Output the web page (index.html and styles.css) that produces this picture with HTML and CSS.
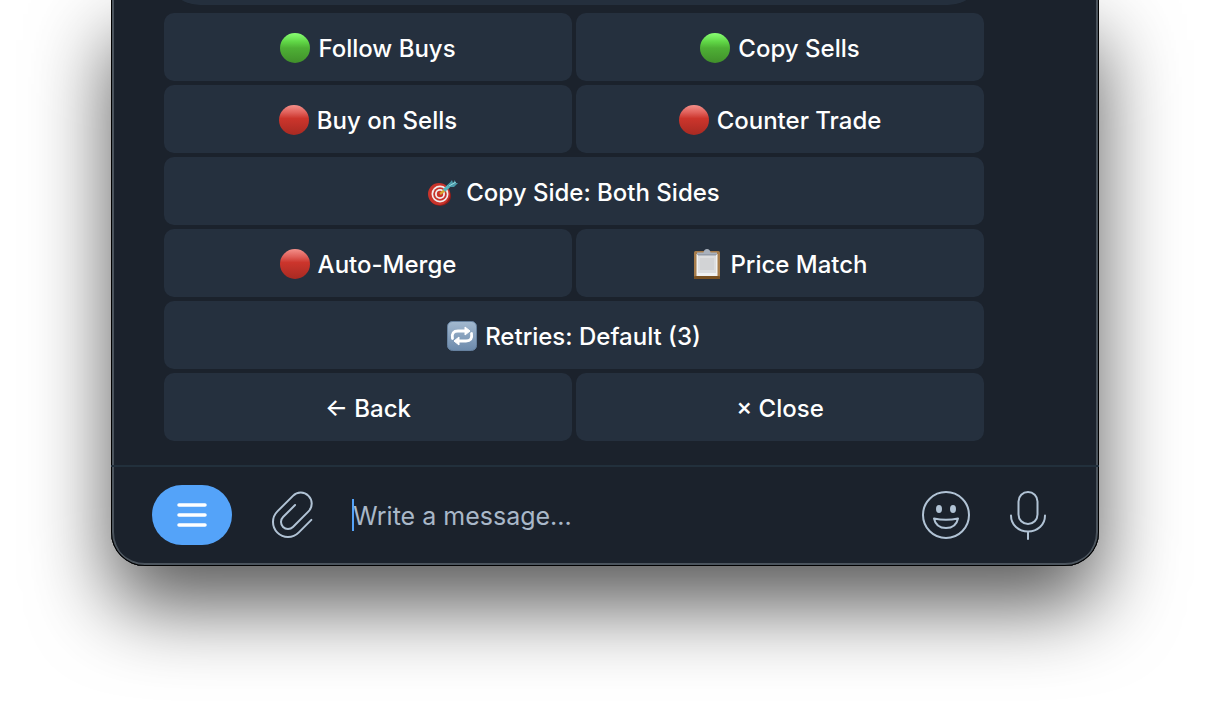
FILE: index.html
```html
<!DOCTYPE html>
<html lang="en">
<head>
    <meta charset="UTF-8">
    <meta name="viewport" content="width=device-width, initial-scale=1.0">
    <title>Copy Trade Settings</title>
    <link rel="stylesheet" href="styles.css">
</head>
<body>
    <main class="window">
        <section class="chat">
            <div class="bubble"></div>
            <div class="keyboard">
                <button type="button" class="key"><span class="dot green"></span>Follow Buys</button>
                <button type="button" class="key"><span class="dot green"></span>Copy Sells</button>
                <button type="button" class="key"><span class="dot red"></span>Buy on Sells</button>
                <button type="button" class="key"><span class="dot red"></span>Counter Trade</button>
                <button type="button" class="key wide">
                    <svg class="emoji" viewBox="0 0 30 30" aria-hidden="true">
                        <ellipse cx="12" cy="19" rx="11" ry="10" fill="#8f1d1a"/>
                        <ellipse cx="11" cy="17" rx="11" ry="11" fill="#c8342c"/>
                        <ellipse cx="12" cy="17" rx="8.500" ry="8.500" fill="#f1eeee"/>
                        <ellipse cx="12" cy="17" rx="6.800" ry="6.800" fill="#c8342c"/>
                        <ellipse cx="12" cy="17" rx="5" ry="5" fill="#f1eeee"/>
                        <ellipse cx="12" cy="17" rx="3.200" ry="3.200" fill="#c8342c"/>
                        <path d="M12 17 L17 13" stroke="#d9a62e" stroke-width="2.4"/>
                        <path d="M16 13.500 L23 7" stroke="#58b4bd" stroke-width="3.6"/>
                        <path d="M20 8 L24 3 L25 6 L27 3 L27 6 L30 6 L26 10 L21 10 Z" fill="#4a9aa8"/>
                        <path d="M21 9 L28 5" stroke="#9be0e4" stroke-width="1"/>
                    </svg>Copy Side: Both Sides
                </button>
                <button type="button" class="key"><span class="dot red"></span>Auto-Merge</button>
                <button type="button" class="key">
                    <svg class="emoji" viewBox="0 0 30 30" aria-hidden="true">
                        <rect x="2" y="2" width="26" height="28" rx="1.5" fill="#a67c4b"/>
                        <rect x="2" y="27" width="26" height="3" rx="1" fill="#7a5122"/>
                        <rect x="4.500" y="5" width="21" height="22" fill="#f0f1f2"/>
                        <rect x="6" y="7" width="18" height="17" fill="#dcdddf"/>
                        <rect x="8" y="9" width="14" height="12" fill="#d2d3d5"/>
                        <path d="M5 6 V3.500 H11.500 Q12 0 15 0 Q18 0 18.500 3.500 H25 V6 Z" fill="#a9b1bd"/>
                        <path d="M6 6 H24" stroke="#7f8794" stroke-width="1"/>
                    </svg>Price Match
                </button>
                <button type="button" class="key wide">
                    <svg class="emoji" viewBox="0 0 30 30" aria-hidden="true">
                        <defs>
                            <linearGradient id="tile" x1="0" y1="0" x2="0" y2="1">
                                <stop offset="0" stop-color="#a3b9cf"/>
                                <stop offset="1" stop-color="#6c8aac"/>
                            </linearGradient>
                        </defs>
                        <rect x="0.500" y="0.500" width="29" height="29" rx="5" fill="url(#tile)" stroke="#66819f"/>
                        <g fill="none" stroke="#fff" stroke-width="2.800" stroke-linecap="round">
                            <path d="M5.500 17.500 C4.500 12.500 6.500 10 11 10 H19"/>
                            <path d="M24.500 12.500 C25.500 17.500 23.500 20 19 20 H11"/>
                        </g>
                        <path d="M18 6 L23 10 L18 14 Z M12 16 L7 20 L12 24 Z" fill="#fff" stroke="#fff" stroke-linejoin="round"/>
                    </svg>Retries: Default (3)
                </button>
                <button type="button" class="key">← Back</button>
                <button type="button" class="key">× Close</button>
            </div>
        </section>

        <form class="composer">
            <button type="button" class="menu" aria-label="Menu">
                <svg width="30" height="24" viewBox="0 0 30 24">
                    <path d="M2 2 H28 M2 12 H28 M2 22 H28" stroke="#fff" stroke-width="3.500" stroke-linecap="round"/>
                </svg>
            </button>
            <button type="button" class="tool" aria-label="Attach file">
                <svg width="44" height="50" viewBox="0 0 44 50">
                    <path transform="translate(18 32) rotate(45)" d="M15 -18 V0 A15 15 0 0 1 -15 0 V-22 A11 11 0 0 1 7 -22 V0 A7 7 0 0 1 -7 0 V-17"/>
                </svg>
            </button>
            <div class="field">
                <span class="caret"></span>
                <input type="text" placeholder="Write a message..." aria-label="Message">
            </div>
            <button type="button" class="tool" aria-label="Emoji">
                <svg width="48" height="50" viewBox="0 0 48 50">
                    <circle cx="24" cy="25" r="23"/>
                    <ellipse class="eye" cx="17" cy="19" rx="3" ry="4"/>
                    <ellipse class="eye" cx="31" cy="19" rx="3" ry="4"/>
                    <path d="M12 28.500 Q24 31 36 28.500 Q34 38 24 38 Q14 38 12 28.500 Z"/>
                </svg>
            </button>
            <button type="button" class="tool" aria-label="Record voice message">
                <svg width="40" height="50" viewBox="0 0 40 50">
                    <rect x="10.500" y="2" width="19" height="32" rx="9.500"/>
                    <path d="M3 25.500 C3 35 10.500 41.500 20 41.500 C29.500 41.500 37 35 37 25.500 M20 41.500 V49"/>
                </svg>
            </button>
        </form>
    </main>
</body>
</html>
```
FILE: styles.css
```css
* {
    box-sizing: border-box;
}

html {
    min-height: 100%;
    background-color: #fff;
}

body {
    margin: 0;
    padding: 0 111px 147px;
    font-family: Inter, "Noto Sans", sans-serif;
    overflow: hidden;
}

.window {
    overflow: hidden;
    padding: 0 3px 3px;
    background-color: #1b222c;
    border-radius: 0 0 34px 34px;
    box-shadow:
        inset 0 -1px 0 #000,
        inset 1px 0 0 #000,
        inset -1px 0 0 #000,
        inset 0 -3px 0 #4b545d,
        inset 3px 0 0 #4b545d,
        inset -3px 0 0 #4b545d,
        0 40px 80px rgba(0, 0, 0, 0.65);
}

.chat {
    padding: 0 112px 24px 50px;
}

/* tail end of the message above the keyboard */
.bubble {
    height: 36px;
    margin-top: -31px;
    margin-bottom: 8px;
    background-color: #242f3d;
    border-radius: 0 0 36px 36px;
}

.keyboard {
    display: grid;
    grid-template-columns: 1fr 1fr;
    gap: 4px;
}

.key {
    display: flex;
    justify-content: center;
    align-items: center;
    gap: 8px;
    height: 68px;
    padding: 2px 0 0;
    border: none;
    border-radius: 10px;
    background-color: #25303e;
    color: #fff;
    font-family: inherit;
    font-size: 24px;
    font-weight: 500;
    cursor: pointer;
}

.wide {
    grid-column: span 2;
}

.dot,
.emoji {
    width: 30px;
    height: 30px;
    flex-shrink: 0;
}

.dot {
    border-radius: 50%;
}

.green {
    background: linear-gradient(#8aff74, #5fd545 30%, #4eb035 50%, #41902b);
}

.red {
    background: linear-gradient(#f4908a, #e0605a 25%, #cc352c 45%, #a82a22);
}

.composer {
    display: flex;
    align-items: center;
    gap: 38px;
    height: 98px;
    margin: 0 -3px;
    padding: 0 51px 0 41px;
    border-top: 2px solid #22303c;
}

.menu {
    display: flex;
    justify-content: center;
    align-items: center;
    width: 80px;
    height: 60px;
    padding: 0;
    border: none;
    border-radius: 30px;
    background-color: #54a3f9;
}

.tool {
    display: flex;
    padding: 0;
    border: none;
    background: none;
}

.tool svg {
    fill: none;
    stroke: #b1c3d5;
    stroke-width: 2;
    stroke-linecap: round;
    stroke-linejoin: round;
}

.tool .eye {
    fill: #b1c3d5;
    stroke: none;
}

.field {
    position: relative;
    flex: 1;
    display: flex;
    align-items: center;
    min-width: 0;
}

/* drawn over the start of the placeholder */
.caret {
    position: absolute;
    left: 0;
    width: 2px;
    height: 32px;
    background-color: #54a3f9;
}

.field input {
    flex: 1;
    min-width: 0;
    padding: 2px 0 0 1px;
    border: none;
    outline: none;
    background: none;
    color: #fff;
    font-family: inherit;
    font-size: 25px;
}

.field input::placeholder {
    color: #a9b8c9;
    opacity: 1;
}
```
